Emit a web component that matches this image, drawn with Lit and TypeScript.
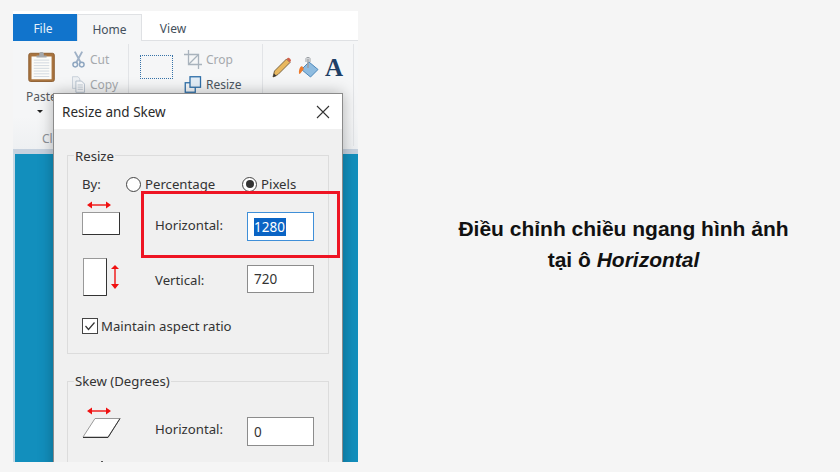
import { LitElement, html, css, svg } from "lit";
import { customElement } from "lit/decorators.js";

const arrowH = svg`<svg class="arrow-h" width="26" height="10" viewBox="0 0 26 10"><path d="M3 5H23" stroke="#f01010" stroke-width="1.4"/><path d="M1 5L6 1.5V8.500Z M25 5L20 1.500V8.500Z" fill="#f01010"/></svg>`;

@customElement("app-root")
export class AppRoot extends LitElement {
  static styles = css`
    :host { display: block; width: 840px; height: 472px; background: #f5f5f5; overflow: hidden; font-family: "Noto Sans", "Open Sans", sans-serif; color: #333; }
    .page { display: flex; height: 472px; }
    .shot { position: relative; flex: none; width: 345px; height: 451px; margin: 11px 0 0 13px; background: #fff; overflow: hidden; display: flex; flex-direction: column; }
    .tabs { flex: none; height: 30px; display: flex; align-items: flex-end; background: #fff; border-bottom: 1px solid #dfe1e4; box-sizing: border-box; font-size: 12px; }
    .tab { height: 26px; display: flex; align-items: center; justify-content: center; box-sizing: border-box; color: #44505c; padding-top: 2px; }
    .file { width: 64px; background: #1174cc; color: #e8f2fb; height: 27px; margin-bottom: -1px; padding-right: 4px; }
    .home { width: 65px; background: #f5f6f7; border: 1px solid #dfe1e4; border-bottom: none; height: 27px; margin-bottom: -1px; }
    .view { width: 62px; }
    .ribbon { flex: none; height: 108px; background: linear-gradient(#f5f6f7 0 70%, #eef0f2); display: flex; font-size: 12px; color: #a5a9ad; }
    .group { box-sizing: border-box; border-right: 1px solid #e2e4e7; margin: 3px 0 3px; display: flex; height: 102px; }
    .g1 { width: 116px; padding: 7px 0 0 13px; gap: 13px; }
    .g2 { width: 134px; padding: 6px 0 0 11px; gap: 11px; }
    .g3 { width: 91px; padding: 13px 0 0 9px; gap: 6px; }
    .paste { display: flex; flex-direction: column; align-items: flex-start; width: 33px; color: #55595e; }
    .paste span { white-space: nowrap; line-height: 16px; margin-top: 7px; }
    .caret { width: 0; height: 0; margin: 5px 0 0 11px; border: 3px solid transparent; border-top: 3px solid #222; border-bottom: 0; }
    .cl { margin-top: 19px; margin-left: 16px; color: #8c9096; line-height: 14px; }
    .cmds { display: flex; flex-direction: column; gap: 6px; }
    .g1 .cmds { margin-top: -1px; }
    .cmd { display: flex; align-items: center; gap: 4px; height: 19px; white-space: nowrap; }
    .g1 .cmd { gap: 5px; }
    .cmd svg { flex: none; }
    .dark { color: #4a5560; }
    .marquee { width: 33px; height: 24px; box-sizing: border-box; border: 1.500px dotted #3672a8; margin-top: 5px; }
    .glyph-a { font-family: "Liberation Serif", serif; font-weight: 700; font-size: 25px; line-height: 22px; color: #1e3f66; }
    .canvas { flex: 1; background: #128fbd; border-top: 5px solid #c6d1de; border-left: 2px solid #c5d8e4; box-sizing: border-box; }
    .dialog { position: absolute; left: 40px; top: 82px; width: 290px; height: 390px; box-sizing: border-box; border: 1.500px solid #8b8b8b; background: #f0f0f0; box-shadow: 0 0 14px rgba(0,0,0,.28); display: flex; flex-direction: column; color: #333; font-size: 13.200px; }
    .title { flex: none; height: 35px; background: #fff; display: flex; align-items: center; justify-content: space-between; padding: 0 12px 0 8px; box-sizing: border-box; font-size: 13.500px; color: #2a2a2a; }
    .body { padding: 26px 13px 0; display: flex; flex-direction: column; gap: 27px; }
    .fs { position: relative; border: 1px solid #dcdcdc; box-sizing: border-box; }
    .resize { height: 199px; }
    .skew { height: 110px; }
    .legend { position: absolute; left: 6px; top: -9px; background: #f0f0f0; padding: 0 1px; line-height: 18px; white-space: nowrap; }
    .skew .legend { top: -10px; }
    .inner { padding: 19px 14px 0; display: flex; flex-direction: column; }
    .by { display: flex; align-items: center; height: 18px; }
    .by-l { width: 44px; flex: none; }
    .radio { display: flex; align-items: center; gap: 4px; white-space: nowrap; width: 116px; flex: none; }
    .dot { width: 13px; height: 13px; border-radius: 50%; border: 1px solid #444; background: #fff; position: relative; flex: none; box-sizing: content-box; }
    .dot.on::after { content: ""; position: absolute; inset: 2.500px; border-radius: 50%; background: #333; }
    .row { display: flex; align-items: center; }
    .ic { width: 73px; flex: none; display: flex; flex-direction: column; align-items: flex-start; }
    .lab { width: 92px; flex: none; }
    .inp { width: 67px; height: 29px; box-sizing: border-box; border: 1px solid #8c8c8c; background: #fff; padding: 0 6px; display: flex; align-items: center; font-size: 13.500px; flex: none; }
    .inp.focus { border-color: #3f8fd8; }
    .sel { background: #0a64c4; color: #fff; padding: 0 1px 0 0; line-height: 18px; }
    .arrow-h { margin-bottom: 2px; margin-left: 4px; }
    .end { align-items: flex-end; }
    .end .lab { margin-bottom: 7px; }
    .r1 { margin-top: 3px; height: 45px; }
    .r1 .ic { margin-bottom: 6px; }
    .r2 { margin-top: 16px; height: 39px; }
    .r2 .ic { flex-direction: row; align-items: center; gap: 3px; padding-left: 1px; box-sizing: border-box; }
    .r2 .lab { margin-top: 7px; }
    .r2 .inp { margin-top: 5px; height: 28px; }
    .check { display: flex; align-items: center; gap: 3px; margin-top: 21px; }
    .box { width: 14px; height: 14px; border: 1px solid #444; background: #fff; flex: none; display: flex; align-items: center; justify-content: center; }
    .sk { padding-top: 24px; }
    .sk .row { height: 40px; }
    .sk .ic { margin-bottom: 8px; }
    .sk .lab { margin-bottom: 8px; }
    .speck { position: absolute; left: 88px; bottom: 0; width: 2px; height: 1px; background: #555; }
    .mark { position: absolute; left: 128px; top: 180px; width: 199px; height: 67px; box-sizing: border-box; border: 3px solid #ee1423; pointer-events: none; }
    .caption { flex: 1; display: flex; flex-direction: column; align-items: center; padding: 0 0 0 49px; margin-top: 213px; font-family: "Liberation Sans", Arial, sans-serif; font-weight: 700; font-size: 21px; line-height: 31px; color: #111; white-space: nowrap; text-align: center; }
    .caption em { font-style: italic; }
  `;

  render() {
    return html`<div class="page">
      <div class="shot">
        <div class="tabs">
          <div class="tab file">File</div>
          <div class="tab home">Home</div>
          <div class="tab view">View</div>
        </div>
        <div class="ribbon">
          <div class="group g1">
            <div class="paste">
              <svg width="32" height="34" viewBox="0 0 32 34"><rect x="1.500" y="2.500" width="28" height="31" rx="2" fill="#a9743f" stroke="#8a5a2c"/><rect x="4.500" y="6" width="22" height="25" fill="#fbfbf8"/><path d="M7 10H24M7 13H24M7 16H24M7 19H24M7 22H24M7 25H24M7 28H24" stroke="#cfd6de"/><path d="M10 5H21V7H10ZM13 3C13 .5 18 .5 18 3V5H13Z" fill="#a5a8ab"/></svg>
              <span>Paste</span>
              <div class="caret"></div>
              <div class="cl">Cl</div>
            </div>
            <div class="cmds">
              <div class="cmd"><svg width="13" height="19" viewBox="0 0 14 19"><path d="M3 1L9.500 13M11 1L4.500 13" stroke="#9fb1c6" stroke-width="2" fill="none"/><circle cx="3.500" cy="15" r="2.500" fill="none" stroke="#8ea6c0" stroke-width="1.600"/><circle cx="10.500" cy="15" r="2.500" fill="none" stroke="#8ea6c0" stroke-width="1.600"/></svg>Cut</div>
              <div class="cmd"><svg width="13" height="19" viewBox="0 0 15 19"><path d="M.5 .5H7L9 3V14H.5Z" fill="#eef1f4" stroke="#c3ccd6"/><path d="M4.500 5.500H11L14.500 9V18.500H4.500Z" fill="#f8f9fb" stroke="#aebbc9"/><path d="M6.500 10H12.500M6.500 12.500H12.500M6.500 15H12.500" stroke="#b9c5d1"/></svg>Copy</div>
            </div>
          </div>
          <div class="group g2">
            <div class="marquee"></div>
            <div class="cmds">
              <div class="cmd"><svg width="18" height="19" viewBox="0 0 18 19"><path d="M4.500 0V14.500H18M0 4.500H14.500V19" fill="none" stroke="#a9b3bd" stroke-width="1.300"/><path d="M4.500 14.500L14.500 4.500" stroke="#a9b3bd" stroke-width="1.300"/></svg>Crop</div>
              <div class="cmd dark"><svg width="18" height="17" viewBox="0 0 17 17"><rect x=".75" y="6.750" width="10" height="9.500" fill="#f4f6f8" stroke="#2f6fa8" stroke-width="1.300"/><rect x="5.500" y=".75" width="10.500" height="10.500" fill="#e3edf6" stroke="#2f6fa8" stroke-width="1.300"/></svg>Resize</div>
            </div>
          </div>
          <div class="group g3">
            <svg width="20" height="21" viewBox="0 0 20 21"><path d="M1 20L2.500 14L14.500 2L18 5.500L6 17.500Z" fill="#e9b85f" stroke="#6e5a3c" stroke-width=".9"/><path d="M14.500 2L16 .8C17 .3 19 2.300 19 3.500L18 5.500Z" fill="#d0604a"/><path d="M1 20L2 16.500L4.500 19Z" fill="#333"/></svg>
            <svg width="21" height="21" viewBox="0 0 21 21"><path d="M11 5L20 12.500L12.500 20L3.500 12.500Z" fill="#8fbce0" stroke="#4d88bb"/><path d="M10 1.500V11" stroke="#9b9fa4" stroke-width="1.500"/><path d="M8 5V1.500C8 0 12 0 12 1.500V5" stroke="#9b9fa4" fill="none"/><path d="M4 9C1.500 10 .5 13 1 17C3 17 3.500 14 6 12Z" fill="#ee7a2a"/></svg>
            <span class="glyph-a">A</span>
          </div>
        </div>
        <div class="canvas"></div>

        <div class="dialog">
          <div class="title">Resize and Skew
            <svg width="14" height="14" viewBox="0 0 14 14"><path d="M1 1L13 13M13 1L1 13" stroke="#333" stroke-width="1.100"/></svg>
          </div>
          <div class="body">
            <div class="fs resize">
              <div class="legend">Resize</div>
              <div class="inner">
                <div class="by">
                  <div class="by-l">By:</div>
                  <div class="radio"><span class="dot"></span>Percentage</div>
                  <div class="radio"><span class="dot on"></span>Pixels</div>
                </div>
                <div class="row end r1">
                  <div class="ic">${arrowH}
                    <svg width="38" height="23" viewBox="0 0 38 23"><rect x=".5" y=".5" width="37" height="22" fill="#fff" stroke="#999"/><path d="M.5 22.500H37.500V.5" fill="none" stroke="#333"/></svg>
                  </div>
                  <div class="lab">Horizontal:</div>
                  <div class="inp focus"><span class="sel">1280</span></div>
                </div>
                <div class="row r2">
                  <div class="ic">
                    <svg width="24" height="38" viewBox="0 0 24 38"><rect x=".5" y=".5" width="23" height="37" fill="#fff" stroke="#999"/><path d="M23.500 .5V37.500H.5" fill="none" stroke="#333"/></svg>
                    <svg width="10" height="24" viewBox="0 0 10 24"><path d="M5 3V21" stroke="#f01010" stroke-width="1.400"/><path d="M5 0L9 4H1ZM5 24L9 19H1Z" fill="#f01010"/></svg>
                  </div>
                  <div class="lab">Vertical:</div>
                  <div class="inp">720</div>
                </div>
                <div class="check">
                  <span class="box"><svg width="12" height="10" viewBox="0 0 12 10"><path d="M1.500 5L4.500 8.500L10.500 1.500" fill="none" stroke="#333" stroke-width="1.200"/></svg></span>Maintain aspect ratio
                </div>
              </div>
            </div>
            <div class="fs skew">
              <div class="legend">Skew (Degrees)</div>
              <div class="inner sk">
                <div class="row end">
                  <div class="ic">${arrowH}
                    <svg width="39" height="20" viewBox="0 0 39 20"><path d="M13 .5H38L26 19H1Z" fill="#fff" stroke="#999"/><path d="M38 .5L26 19.500H1" fill="none" stroke="#333"/></svg>
                  </div>
                  <div class="lab">Horizontal:</div>
                  <div class="inp">0</div>
                </div>
              </div>
            </div>
          </div>
        </div>
        <div class="speck"></div>
        <div class="mark"></div>
      </div>
      <div class="caption">
        <div>Điều chỉnh chiều ngang hình ảnh</div>
        <div>tại ô <em>Horizontal</em></div>
      </div>
    </div>`;
  }
}
